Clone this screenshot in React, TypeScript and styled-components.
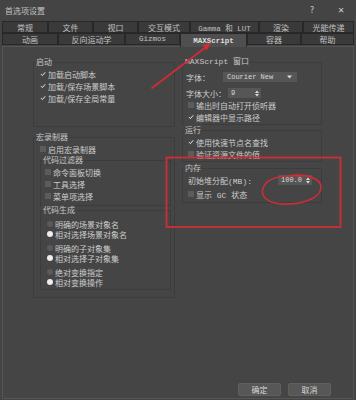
import React from "react";
import styled, { createGlobalStyle } from "styled-components";

const CJK = `"Noto Sans CJK SC", "Noto Sans", sans-serif`;
const MONO = `"Liberation Mono", "Noto Sans CJK SC", monospace`;

const Global = createGlobalStyle`
  html, body { margin: 0; padding: 0; background: #444444; }
  body { font-family: ${CJK}; }
  * { box-sizing: border-box; }
`;

const Dialog = styled.div`
  position: relative;
  width: 356px;
  height: 400px;
  background: #444444;
  color: #c8c8c8;
  font-family: ${CJK};
  font-size: 8px;
  overflow: hidden;
  display: flex;
  flex-direction: column;
`;

const TitleBar = styled.div`
  height: 21px;
  flex: none;
  display: flex;
  align-items: center;
  padding: 0 8px 1px 5px;
  color: #c0c0c0;
`;

const TitleText = styled.span`
  font-size: 8px;
`;

const TitleControls = styled.div`
  margin-left: auto;
  display: flex;
  gap: 15px;
`;

const TitleButton = styled.span`
  width: 14px;
  text-align: center;
  font-family: "DejaVu Sans", sans-serif;
  font-size: 8px;
  color: #cccccc;
`;

const TabRows = styled.div`
  flex: none;
  display: flex;
  flex-direction: column;
  padding: 0 2px;
`;

const TabRow = styled.div<{ $h: number }>`
  display: flex;
  align-items: flex-start;
  height: ${(p) => p.$h}px;
`;

const Tab = styled.div<{ $w: number; $active?: boolean; $mono?: boolean }>`
  position: relative;
  z-index: ${(p) => (p.$active ? 2 : 1)};
  flex: none;
  width: ${(p) => p.$w}px;
  height: ${(p) => (p.$active ? 14 : 12)}px;
  display: flex;
  align-items: center;
  justify-content: center;
  background: ${(p) => (p.$active ? "#4f4f4f" : "#3a3a3a")};
  border: 1px solid #282828;
  border-bottom: ${(p) => (p.$active ? "none" : "1px solid #282828")};
  color: ${(p) => (p.$active ? "#dedede" : "#c0c0c0")};
  font-family: ${(p) => (p.$mono ? MONO : CJK)};
  font-size: ${(p) => (p.$mono ? "7.5px" : "8px")};
  font-weight: ${(p) => (p.$active ? 700 : 400)};
  white-space: nowrap;
`;

const Page = styled.div`
  flex: 1;
  margin: 0 2px 1px;
  border: 1px solid #555555;
  background: #454545;
  display: flex;
  flex-direction: column;
  padding: 15px 22px 2px 30px;
`;

const Columns = styled.div`
  display: flex;
  gap: 7px;
  align-items: flex-start;
`;

const Column = styled.div<{ $w: number }>`
  width: ${(p) => p.$w}px;
  display: flex;
  flex-direction: column;
`;

const Group = styled.div<{ $mt?: number; $ml?: number; $mr?: number; $pb?: number }>`
  border: 1px solid #3c3c3c;
  margin: ${(p) => p.$mt ?? 0}px ${(p) => p.$mr ?? 0}px 0 ${(p) => p.$ml ?? 0}px;
  padding-bottom: ${(p) => p.$pb ?? 0}px;
  display: flex;
  flex-direction: column;
`;

const GroupTitle = styled.div<{ $mono?: boolean }>`
  align-self: flex-start;
  height: 12px;
  line-height: 12px;
  margin: -7px 0 0 1px;
  padding: 0 1px;
  background: #454545;
  color: #c6c6c6;
  white-space: nowrap;
  font-family: ${(p) => (p.$mono ? MONO : CJK)};
`;

const Row = styled.div<{ $pl: number; $h?: number; $mt?: number }>`
  display: flex;
  align-items: center;
  gap: 2px;
  height: ${(p) => p.$h ?? 12}px;
  margin-top: ${(p) => p.$mt ?? 0}px;
  padding-left: ${(p) => p.$pl}px;
  white-space: nowrap;
  color: #cdcdcd;
`;

const RadioList = styled.div`
  display: flex;
  flex-direction: column;
  padding-top: 3px;
  gap: 4px;
`;

const RadioPair = styled.div`
  display: flex;
  flex-direction: column;
`;

const Label = styled.span<{ $w?: number; $mono?: boolean }>`
  display: inline-block;
  width: ${(p) => (p.$w ? `${p.$w}px` : "auto")};
  font-family: ${(p) => (p.$mono ? MONO : CJK)};
  flex: none;
`;

const Box = styled.span<{ $on?: boolean }>`
  flex: none;
  width: 6px;
  height: 6px;
  background: ${(p) => (p.$on ? "#484848" : "#5c5c5c")};
  display: flex;
  align-items: center;
  justify-content: center;
  overflow: visible;
`;

const RadioDot = styled.span<{ $on?: boolean }>`
  flex: none;
  width: 6px;
  height: 6px;
  border-radius: 50%;
  background: ${(p) => (p.$on ? "#eeeeee" : "#5a5a5a")};
`;

const Select = styled.div`
  width: 74px;
  height: 10px;
  background: #565656;
  display: flex;
  align-items: center;
  justify-content: space-between;
  padding: 0 5px 0 4px;
  font-family: ${MONO};
  font-size: 7px;
  color: #d8d8d8;
`;

const Spinner = styled.div<{ $w: number }>`
  width: ${(p) => p.$w}px;
  height: 10px;
  background: #565656;
  display: flex;
  align-items: center;
  justify-content: space-between;
  padding: 0 2px 0 3px;
  font-family: ${MONO};
  font-size: 7px;
  color: #d8d8d8;
`;

const ButtonBar = styled.div`
  margin-top: auto;
  display: flex;
  justify-content: flex-end;
  gap: 7px;
`;

const Button = styled.div`
  width: 43px;
  height: 13px;
  display: flex;
  align-items: center;
  justify-content: center;
  background: #575757;
  border: 1px solid #606060;
  border-radius: 2px;
  color: #d6d6d6;
  font-size: 8px;
`;

const Overlay = styled.svg`
  position: absolute;
  left: 0;
  top: 0;
  pointer-events: none;
  z-index: 5;
`;

const Check = () => (
  <svg width="6" height="6" viewBox="0 0 6 6">
    <path d="M1 3.1 L2.4 4.6 L5.2 1.3" fill="none" stroke="#e4e4e4" strokeWidth="1" />
  </svg>
);

const Arrow = () => (
  <svg width="5" height="4" viewBox="0 0 5 4">
    <path d="M0 0.5 H5 L2.5 3.5 Z" fill="#dcdcdc" />
  </svg>
);

const SpinArrows = () => (
  <svg width="4" height="7" viewBox="0 0 4 7">
    <path d="M0 3 L2 0.5 L4 3 Z M0 4 L2 6.5 L4 4 Z" fill="#dadada" />
  </svg>
);

const CheckItem = ({ on, pl, text, mono, mt }: { on?: boolean; pl: number; text: string; mono?: boolean; mt?: number }) => (
  <Row $pl={pl} $mt={mt}>
    <Box $on={on}>{on && <Check />}</Box>
    <Label $mono={mono}>{text}</Label>
  </Row>
);

const RadioItem = ({ on, text }: { on?: boolean; text: string }) => (
  <Row $pl={6} $h={10}>
    <RadioDot $on={on} />
    <Label>{text}</Label>
  </Row>
);

const row1: [string, number, boolean?][] = [
  ["常规", 46],
  ["文件", 45],
  ["视口", 45],
  ["交互模式", 52],
  ["Gamma 和 LUT", 69, true],
  ["渲染", 44],
  ["光能传递", 51],
];

const row2: [string, number, boolean?, boolean?][] = [
  ["动画", 56],
  ["反向运动学", 67],
  ["Gizmos", 55, true],
  ["MAXScript", 67, true, true],
  ["容器", 54],
  ["帮助", 53],
];

export default function App() {
  return (
    <>
      <Global />
      <Dialog>
        <TitleBar>
          <TitleText>首选项设置</TitleText>
          <TitleControls>
            <TitleButton>?</TitleButton>
            <TitleButton>✕</TitleButton>
          </TitleControls>
        </TitleBar>

        <TabRows>
          <TabRow $h={12}>
            {row1.map(([t, w, m]) => (
              <Tab key={t} $w={w} $mono={m}>
                {t}
              </Tab>
            ))}
          </TabRow>
          <TabRow $h={13}>
            {row2.map(([t, w, m, a]) => (
              <Tab key={t} $w={w} $mono={m} $active={a}>
                {t}
              </Tab>
            ))}
          </TabRow>
        </TabRows>

        <Page>
          <Columns>
            <Column $w={142}>
              <Group $pb={22}>
                <GroupTitle>启动</GroupTitle>
                <CheckItem on pl={6} text="加载启动脚本" />
                <CheckItem on pl={6} text="加载/保存场景脚本" />
                <CheckItem on pl={6} text="加载/保存全局常量" />
              </Group>

              <Group $mt={10} $pb={7}>
                <GroupTitle>宏录制器</GroupTitle>
                <CheckItem pl={6} text="启用宏录制器" />
                <Group $mt={5} $ml={6} $mr={3} $pb={3}>
                  <GroupTitle>代码过滤器</GroupTitle>
                  <CheckItem pl={4} text="命令面板切换" />
                  <CheckItem pl={4} text="工具选择" />
                  <CheckItem pl={4} text="菜单项选择" />
                </Group>
                <Group $mt={4} $ml={6} $mr={3} $pb={2}>
                  <GroupTitle>代码生成</GroupTitle>
                  <RadioList>
                    <RadioPair>
                      <RadioItem text="明确的场景对象名" />
                      <RadioItem on text="相对选择场景对象名" />
                    </RadioPair>
                    <RadioPair>
                      <RadioItem text="明确的子对象集" />
                      <RadioItem on text="相对选择子对象集" />
                    </RadioPair>
                    <RadioPair>
                      <RadioItem text="绝对变换指定" />
                      <RadioItem on text="相对变换操作" />
                    </RadioPair>
                  </RadioList>
                </Group>
              </Group>
            </Column>

            <Column $w={140}>
              <Group $pb={1}>
                <GroupTitle $mono>MAXScript 窗口</GroupTitle>
                <Row $pl={3} $mt={3}>
                  <Label $w={35}>字体：</Label>
                  <Select>
                    <span>Courier New</span>
                    <Arrow />
                  </Select>
                </Row>
                <Row $pl={3} $mt={4}>
                  <Label>字体大小：</Label>
                  <Spinner $w={33}>
                    <span>9</span>
                    <SpinArrows />
                  </Spinner>
                </Row>
                <CheckItem pl={5} text="输出时自动打开侦听器" />
                <CheckItem on pl={5} text="编辑器中显示路径" />
              </Group>

              <Group $mt={5} $pb={1}>
                <GroupTitle>运行</GroupTitle>
                <CheckItem on pl={5} text="使用快速节点名查找" />
                <CheckItem pl={5} text="验证资源文件的值" />
              </Group>

              <Group $mt={6} $pb={2}>
                <GroupTitle>内存</GroupTitle>
                <Row $pl={5}>
                  <Label $w={88} $mono>初始堆分配(MB):</Label>
                  <Spinner $w={34}>
                    <span>100.0</span>
                    <SpinArrows />
                  </Spinner>
                </Row>
                <CheckItem pl={5} mt={2} mono text="显示 GC 状态" />
              </Group>
            </Column>
          </Columns>

          <ButtonBar>
            <Button>确定</Button>
            <Button>取消</Button>
          </ButtonBar>
        </Page>

        <Overlay width="356" height="400" viewBox="0 0 356 400">
          <rect x="166.5" y="157.5" width="174" height="69.5" fill="none" stroke="#cf2d36" strokeWidth="1.8" />
          <path
            d="M288 176 C305 173, 322 178, 321 188 C320 199, 300 205, 282 204 C266 203, 259 195, 264 186 C268 178, 281 175, 301 176"
            fill="none"
            stroke="#cf2d36"
            strokeWidth="1.6"
            strokeLinecap="round"
          />
          <line x1="152" y1="88" x2="206" y2="47" stroke="#cf2d36" strokeWidth="1.8" strokeLinecap="round" />
          <polygon points="211.5,42.5 206.6,50.6 202.4,45.2" fill="#cf2d36" />
        </Overlay>
      </Dialog>
    </>
  );
}
